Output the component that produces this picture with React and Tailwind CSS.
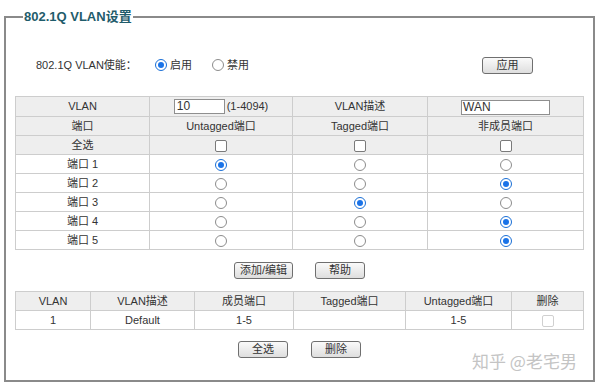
import React from "react";

const FONT = { fontFamily: '"Liberation Sans", "Noto Sans CJK SC", sans-serif' };

function Radio({ checked }) {
  if (checked) {
    return (
      <span className="inline-block align-middle w-[12px] h-[12px] rounded-full border border-[#1a6fd6] bg-white p-[2px]">
        <span className="block w-full h-full rounded-full bg-[#1a73e8]" />
      </span>
    );
  }
  return <span className="inline-block align-middle w-[12px] h-[12px] rounded-full border border-[#8c8c8c] bg-white" />;
}

function Check({ disabled }) {
  return (
    <span
      className={`inline-block align-middle w-[12px] h-[12px] rounded-[2px] border bg-white ${
        disabled ? "border-[#d0d0d0]" : "border-[#7a7a7a]"
      }`}
    />
  );
}

function Btn({ children, w = "w-[50px]" }) {
  return (
    <button
      className={`${w} h-[17px] rounded-[3px] border border-[#6f6f6f] bg-gradient-to-b from-[#fafafa] to-[#dedede] text-[11px] leading-[15px] text-[#333]`}
    >
      {children}
    </button>
  );
}

const ports = [
  { name: "端口 1", sel: 0 },
  { name: "端口 2", sel: 2 },
  { name: "端口 3", sel: 1 },
  { name: "端口 4", sel: 2 },
  { name: "端口 5", sel: 2 },
];

const td = "border border-[#cdcdcd] text-center p-0 h-[19px]";

export default function App() {
  return (
    <div className="w-[600px] h-[387px] bg-white text-[#333] text-[11px] relative overflow-hidden" style={FONT}>
      <fieldset className="ml-[4px] mt-[9px] w-[590px] h-[373px] border-2 border-[#8a8a8a] px-[9px]">
        <legend className="ml-[8px] px-[1px] text-[13px] leading-[16px] font-bold text-[#1f5c6b]">
          802.1Q VLAN设置
        </legend>

        {/* enable row */}
        <div className="flex items-center h-[20px] mt-[30px]">
          <span className="ml-[21px] w-[119px]">802.1Q VLAN使能：</span>
          <label className="flex items-center gap-[3px]">
            <Radio checked />
            <span>启用</span>
          </label>
          <label className="flex items-center gap-[3px] ml-[20px]">
            <Radio />
            <span>禁用</span>
          </label>
          <div className="ml-auto mr-[51px]">
            <Btn w="w-[51px]">应用</Btn>
          </div>
        </div>

        {/* vlan config table */}
        <table className="mt-[21px] w-[568px] table-fixed border-collapse">
          <colgroup>
            <col className="w-[134px]" />
            <col className="w-[143px]" />
            <col className="w-[135px]" />
            <col className="w-[156px]" />
          </colgroup>
          <tbody>
            <tr className="bg-[#eeeeee]">
              <td className={`${td} h-[20px]`}>VLAN</td>
              <td className={`${td} h-[20px]`}>
                <span className="inline-flex items-center">
                  <span className="w-[51px] h-[15px] border border-[#8f8f8f] bg-white text-left pl-[2px] text-[12px] leading-[13px]">10</span>
                  <span className="ml-[2px]">(1-4094)</span>
                </span>
              </td>
              <td className={`${td} h-[20px]`}>VLAN描述</td>
              <td className={`${td} h-[20px]`}>
                <span className="inline-block align-middle w-[89px] h-[15px] border border-[#8f8f8f] bg-white text-left pl-[1px] text-[12px] leading-[13px]">WAN</span>
              </td>
            </tr>
            <tr className="bg-[#eeeeee]">
              <td className={td}>端口</td>
              <td className={td}>Untagged端口</td>
              <td className={td}>Tagged端口</td>
              <td className={td}>非成员端口</td>
            </tr>
            <tr className="bg-[#eeeeee]">
              <td className={td}>全选</td>
              <td className={td}><Check /></td>
              <td className={td}><Check /></td>
              <td className={td}><Check /></td>
            </tr>
            {ports.map((p) => (
              <tr key={p.name} className="bg-white">
                <td className={td}>{p.name}</td>
                <td className={td}><Radio checked={p.sel === 0} /></td>
                <td className={td}><Radio checked={p.sel === 1} /></td>
                <td className={td}><Radio checked={p.sel === 2} /></td>
              </tr>
            ))}
          </tbody>
        </table>

        <div className="flex justify-center gap-[22px] mt-[12px]">
          <Btn w="w-[59px]">添加/编辑</Btn>
          <Btn>帮助</Btn>
        </div>

        {/* vlan list */}
        <table className="mt-[12px] w-[568px] table-fixed border-collapse">
          <colgroup>
            <col className="w-[75px]" />
            <col className="w-[104px]" />
            <col className="w-[99px]" />
            <col className="w-[112px]" />
            <col className="w-[106px]" />
            <col className="w-[72px]" />
          </colgroup>
          <tbody>
            <tr className="bg-[#eeeeee]">
              <td className={td}>VLAN</td>
              <td className={td}>VLAN描述</td>
              <td className={td}>成员端口</td>
              <td className={td}>Tagged端口</td>
              <td className={td}>Untagged端口</td>
              <td className={td}>删除</td>
            </tr>
            <tr className="bg-white">
              <td className={td}>1</td>
              <td className={td}>Default</td>
              <td className={td}>1-5</td>
              <td className={td}></td>
              <td className={td}>1-5</td>
              <td className={td}><Check disabled /></td>
            </tr>
          </tbody>
        </table>

        <div className="flex justify-center gap-[23px] mt-[11px]">
          <Btn>全选</Btn>
          <Btn>删除</Btn>
        </div>
      </fieldset>

      <span className="absolute left-[472px] top-[351px] text-[17px] leading-[20px] text-[#c4c4c4]" style={{ fontFamily: '"Noto Sans CJK SC", sans-serif' }}>
        知乎 @老宅男
      </span>
    </div>
  );
}
